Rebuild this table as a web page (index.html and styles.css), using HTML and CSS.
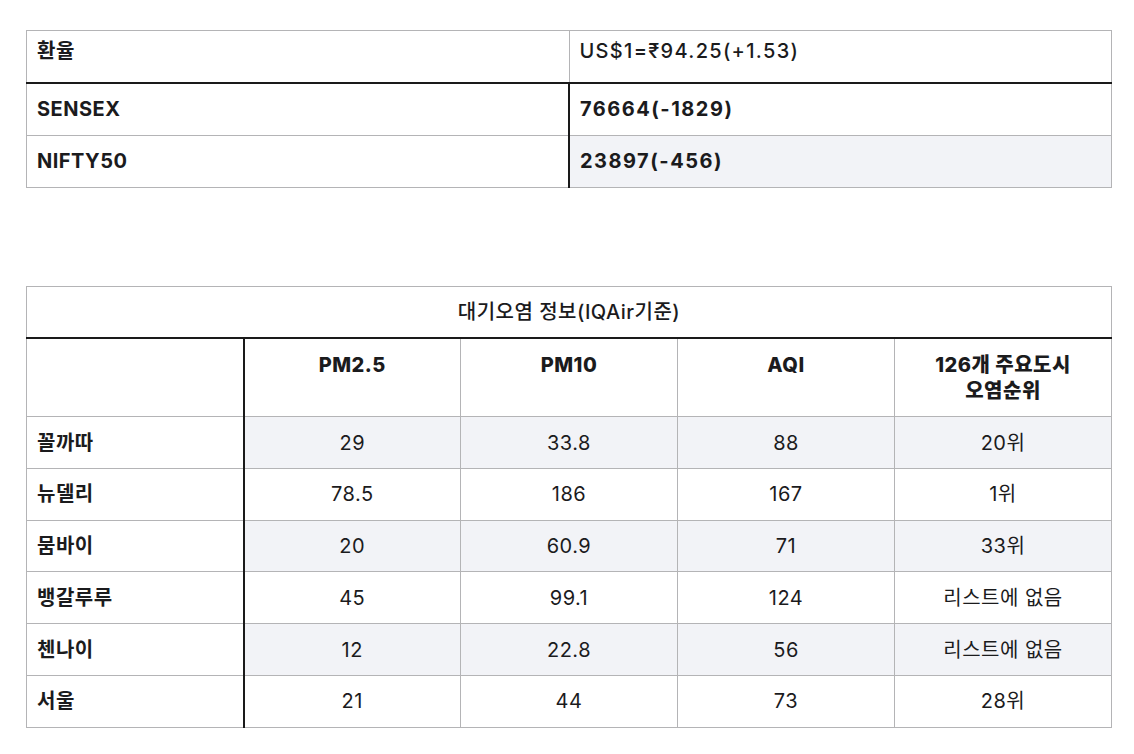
FILE: index.html
```html
<!DOCTYPE html>
<html lang="ko">
<head>
<meta charset="utf-8">
<title>환율 및 대기오염 정보</title>
<link rel="stylesheet" href="styles.css">
</head>
<body>
<main class="page">
  <table class="grid market">
    <colgroup><col class="half"><col class="half"></colgroup>
    <tr class="head-row">
      <td class="rowhead">환율</td>
      <td class="val-regular">US$1=₹94.25(+1.53)</td>
    </tr>
    <tr>
      <td class="rowhead">SENSEX</td>
      <td class="data strong">76664(-1829)</td>
    </tr>
    <tr class="stripe">
      <td class="rowhead">NIFTY50</td>
      <td class="data strong">23897(-456)</td>
    </tr>
  </table>

  <table class="grid air">
    <colgroup><col><col><col><col><col></colgroup>
    <tr class="title-row">
      <td colspan="5" class="title">대기오염 정보(IQAir기준)</td>
    </tr>
    <tr class="col-heads">
      <td class="rowhead"></td>
      <td class="colhead">PM2.5</td>
      <td class="colhead">PM10</td>
      <td class="colhead">AQI</td>
      <td class="colhead">126개 주요도시<br>오염순위</td>
    </tr>
    <tr class="stripe">
      <td class="rowhead">꼴까따</td>
      <td class="num">29</td><td class="num">33.8</td><td class="num">88</td><td class="num">20위</td>
    </tr>
    <tr>
      <td class="rowhead">뉴델리</td>
      <td class="num">78.5</td><td class="num">186</td><td class="num">167</td><td class="num">1위</td>
    </tr>
    <tr class="stripe">
      <td class="rowhead">뭄바이</td>
      <td class="num">20</td><td class="num">60.9</td><td class="num">71</td><td class="num">33위</td>
    </tr>
    <tr>
      <td class="rowhead">뱅갈루루</td>
      <td class="num">45</td><td class="num">99.1</td><td class="num">124</td><td class="num">리스트에 없음</td>
    </tr>
    <tr class="stripe">
      <td class="rowhead">첸나이</td>
      <td class="num">12</td><td class="num">22.8</td><td class="num">56</td><td class="num">리스트에 없음</td>
    </tr>
    <tr>
      <td class="rowhead">서울</td>
      <td class="num">21</td><td class="num">44</td><td class="num">73</td><td class="num">28위</td>
    </tr>
  </table>
</main>
</body>
</html>
```

FILE: styles.css
```css
html, body {
  margin: 0;
  padding: 0;
  background: #ffffff;
}

body {
  font-family: "Inter", "Noto Sans CJK KR", sans-serif;
  font-size: 20px;
  letter-spacing: 0.5px;
  color: #1b1b1d;
}

.page {
  padding: 30px 22px 0 26px;
  display: flex;
  flex-direction: column;
  gap: 98px;
}

.grid {
  width: 1086px;
  border-collapse: collapse;
  table-layout: fixed;
}

.grid td {
  border: 1px solid #b4b4b6;
  padding: 12.4px 10px;
  line-height: 26px;
  vertical-align: middle;
}

.half {
  width: 50%;
}

/* market table */
.market .head-row td {
  padding-top: 6.5px;
  padding-bottom: 18.5px;
  border-bottom: 2px solid #1a1a1a;
}

.market tr:not(.head-row) .rowhead {
  border-right: 2px solid #1a1a1a;
}

.rowhead {
  font-weight: 700;
  text-align: left;
}

.val-regular {
  font-weight: 500;
  letter-spacing: 1.3px;
}

.strong {
  font-weight: 700;
  letter-spacing: 1.5px;
}

.stripe td:not(.rowhead) {
  background: #f2f3f7;
}

/* air table */
.title {
  text-align: center;
  font-weight: 500;
  padding-top: 11.5px;
  padding-bottom: 11.5px;
  border-bottom: 2px solid #1a1a1a !important;
}

.air tr:not(.title-row) .rowhead {
  border-right: 2px solid #1a1a1a;
}

.colhead {
  font-weight: 800;
  text-align: center;
  vertical-align: top !important;
  padding-bottom: 10.5px;
}

.num {
  text-align: center;
  font-weight: 400;
}
```
